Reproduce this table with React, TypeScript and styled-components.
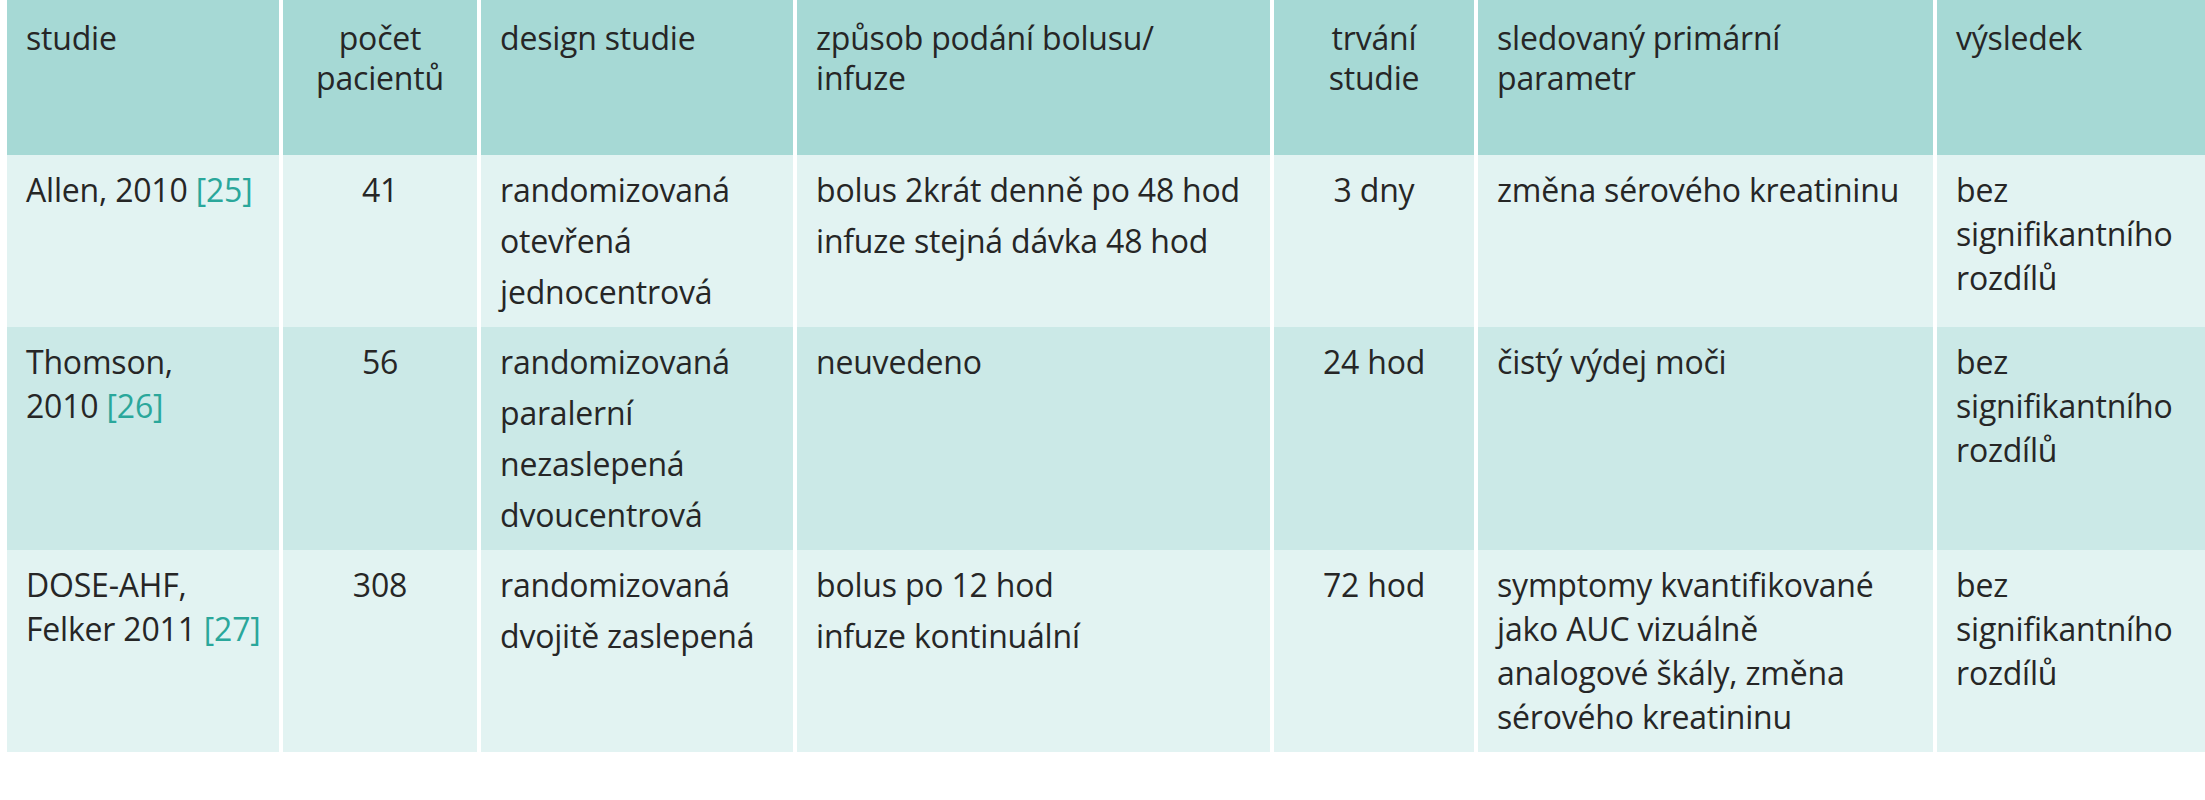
import React from "react";
import styled, { createGlobalStyle } from "styled-components";

const GlobalStyle = createGlobalStyle`
  html, body {
    margin: 0;
    padding: 0;
    background: #ffffff;
  }
  body {
    font-family: "Open Sans", "Noto Sans", sans-serif;
    color: #262626;
  }
`;

const Page = styled.div`
  width: 2205px;
  padding-left: 7px;
  box-sizing: border-box;
  overflow: hidden;
`;

const Table = styled.div`
  display: flex;
  flex-direction: column;
  width: 2198px;
`;

const rowColors = {
  head: "#a6d9d5",
  light: "#e2f3f2",
  dark: "#cbe9e7",
};

const Row = styled.div<{ $tone: "head" | "light" | "dark" }>`
  display: flex;
  align-items: stretch;
  background: ${(p) => rowColors[p.$tone]};
  ${(p) => (p.$tone === "head" ? "height: 155px;" : "")}
`;

const Cell = styled.div<{ $w: number; $center?: boolean; $head?: boolean }>`
  flex: 0 0 auto;
  width: ${(p) => p.$w}px;
  box-sizing: border-box;
  border-left: 4px solid #ffffff;
  padding: ${(p) => (p.$head ? "18px 19px 0" : "13px 19px 13px")};
  display: flex;
  flex-direction: column;
  gap: 7px;
  font-size: 32px;
  line-height: ${(p) => (p.$head ? "40px" : "44px")};
  text-align: ${(p) => (p.$center ? "center" : "left")};
  letter-spacing: -0.2px;

  &:first-child {
    border-left: none;
  }
`;

const Para = styled.div``;

const NoWrap = styled.span`
  white-space: nowrap;
`;

const Ref = styled.span`
  color: #2aa79b;
`;

const widths = [272, 198, 316, 477, 204, 459, 272];
const centered = [false, true, false, false, true, false, false];

type Line = React.ReactNode;
type RowData = { tone: "light" | "dark"; cells: Line[][] };

const header: Line[] = [
  "studie",
  <>
    počet
    <br />
    pacientů
  </>,
  "design studie",
  <>
    způsob podání bolusu/
    <br />
    infuze
  </>,
  <>
    trvání
    <br />
    studie
  </>,
  <>
    sledovaný primární
    <br />
    parametr
  </>,
  "výsledek",
];

const rows: RowData[] = [
  {
    tone: "light",
    cells: [
      [
        <>
          Allen, 2010 <Ref>[25]</Ref>
        </>,
      ],
      ["41"],
      ["randomizovaná", "otevřená", "jednocentrová"],
      ["bolus 2krát denně po 48 hod", "infuze stejná dávka 48 hod"],
      ["3 dny"],
      ["změna sérového kreatininu"],
      ["bez signifikantního rozdílů"],
    ],
  },
  {
    tone: "dark",
    cells: [
      [
        <>
          Thomson,
          <br />
          2010 <Ref>[26]</Ref>
        </>,
      ],
      ["56"],
      ["randomizovaná", "paralerní", "nezaslepená", "dvoucentrová"],
      ["neuvedeno"],
      ["24 hod"],
      ["čistý výdej moči"],
      ["bez signifikantního rozdílů"],
    ],
  },
  {
    tone: "light",
    cells: [
      [
        <>
          DOSE-AHF,
          <br />
          <NoWrap>
            Felker 2011 <Ref>[27]</Ref>
          </NoWrap>
        </>,
      ],
      ["308"],
      ["randomizovaná", "dvojitě zaslepená"],
      ["bolus po 12 hod", "infuze kontinuální"],
      ["72 hod"],
      [
        "symptomy kvantifikované jako AUC vizuálně analogové škály, změna sérového kreatininu",
      ],
      ["bez signifikantního rozdílů"],
    ],
  },
];

const App = () => {
  return (
    <Page>
      <GlobalStyle />
      <Table>
        <Row $tone="head">
          {header.map((h, i) => (
            <Cell key={i} $w={widths[i]} $center={centered[i]} $head>
              <Para>{h}</Para>
            </Cell>
          ))}
        </Row>
        {rows.map((r, ri) => (
          <Row key={ri} $tone={r.tone}>
            {r.cells.map((lines, ci) => (
              <Cell key={ci} $w={widths[ci]} $center={centered[ci]}>
                {lines.map((l, li) => (
                  <Para key={li}>{l}</Para>
                ))}
              </Cell>
            ))}
          </Row>
        ))}
      </Table>
    </Page>
  );
};

export default App;
